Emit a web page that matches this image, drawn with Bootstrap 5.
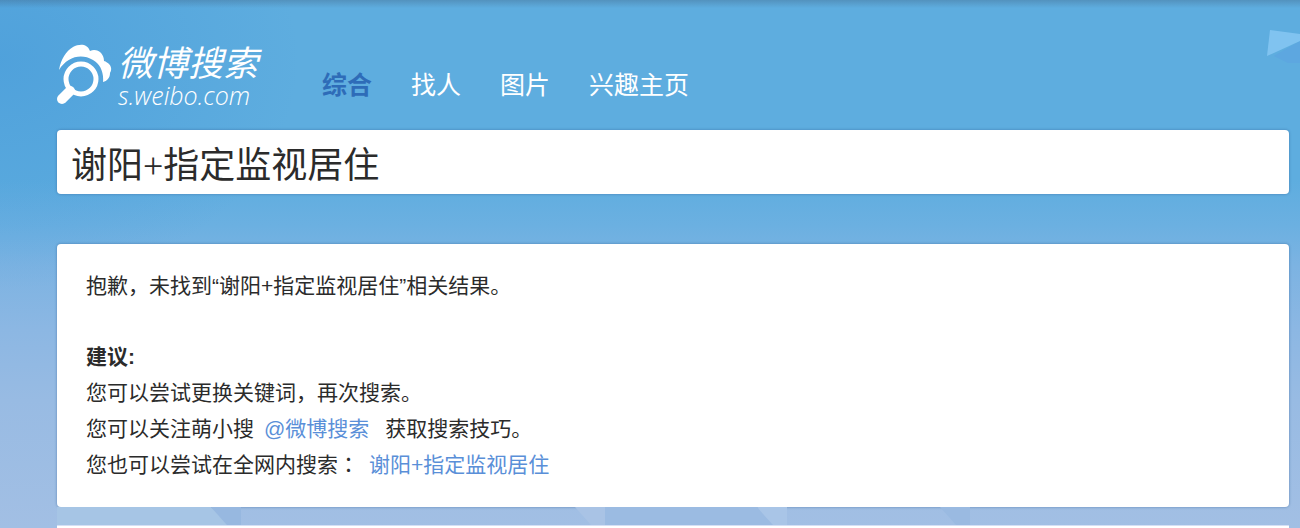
<!DOCTYPE html>
<html lang="zh-CN">
<head>
<meta charset="utf-8">
<meta name="viewport" content="width=device-width, initial-scale=1">
<title>微博搜索</title>
<link href="https://cdn.jsdelivr.net/npm/bootstrap@5.3.0/dist/css/bootstrap.min.css" rel="stylesheet">
<style>
  body {
    font-family: "Liberation Sans", "Noto Sans CJK SC", sans-serif;
    color: #2b2b2b;
    background:
      linear-gradient(rgba(60, 90, 120, .32), rgba(60, 90, 120, 0) 8px) no-repeat,
      radial-gradient(300px 230px at 0 60px, rgba(58, 144, 214, .4), rgba(58, 144, 214, 0)) no-repeat,
      linear-gradient(#5eaddf 0, #5eaddf 180px, #6bb0e1 225px, #7cb3e2 265px, #8cb7e3 330px, #98bbe3 400px, #a2bfe4 528px);
  }
  .page { padding: 0 11px 0 57px; }
  .site-head { height: 130px; padding: 42px 0 0; }
  .logo { color: #fff; gap: 5px; width: 265px; }
  .logo-icon { width: 56px; height: 60px; margin-top: 2px; }
  .logo-words { font-style: italic; padding-top: 2px; }
  .logo-cn { font-size: 35px; line-height: 40px; }
  .logo-en { font-family: "Open Sans", sans-serif; font-weight: 300; font-size: 25px; line-height: 22px; }
  .tabs { gap: 39px; padding-top: 24px; font-size: 25px; line-height: 38px; }
  .tabs .nav-link { padding: 0; color: #fff; }
  .tabs .nav-link.active { color: #2e6cb8; font-weight: 700; }
  .panel { background: #fff; border-radius: 4px; box-shadow: 0 0 2px 1px rgba(50, 95, 150, .3); }
  .query, .query:focus {
    height: 64px; padding: 0 14px; border: 0; border-radius: 4px;
    font-family: "Liberation Serif", "Noto Sans CJK SC", sans-serif;
    font-size: 36px; line-height: 54px; color: #2b2b2b; background: #fff;
  }
  .query:not(:focus) { box-shadow: 0 0 2px 1px rgba(50, 95, 150, .3); }
  .result { margin-top: 50px; padding: 24px 29px; font-size: 21px; line-height: 36px; }
  .result p { margin: 0; }
  .result p.lead-line { margin-bottom: 35px; }
  .result a { color: #5a8fd8; text-decoration: none; margin: 0 10px; }
  .wide-colon { font-family: "Noto Sans CJK TC", sans-serif; line-height: 1; }
  .facets { height: 18px; display: block; width: 100%; }
  .more { border-top: 1px solid #d5dff5; background: #fff; min-height: 3px; }
  .plane { position: absolute; top: 26px; right: 0; width: 36px; height: 40px; }
</style>
</head>
<body>
<svg class="plane" viewBox="0 0 36 40" aria-hidden="true">
  <path d="M10 30 36 15V37H24Z" fill="#5ca5e0" opacity=".8"/>
  <path d="M6 4 36 8V15L3 30Z" fill="#80c3f0"/>
</svg>
<div class="page min-vh-100 d-flex flex-column">
  <header class="site-head d-flex align-items-start">
    <a class="logo d-flex align-items-start text-decoration-none" href="#">
      <svg class="logo-icon" viewBox="0 0 56 60" aria-hidden="true">
        <path d="M2 26C4 15 9 7 16 3 22 0 30-1 33 7 40 4 47 9 47 17 53 19 56 24 53 29 53 34 50 37 46 38 47 28 43 20 36 16 24 9 10 13 2 26Z" fill="#fff"/>
        <circle cx="24" cy="35" r="15" fill="none" stroke="#fff" stroke-width="5"/>
        <path d="M13 47 5 55" stroke="#fff" stroke-width="10" stroke-linecap="round"/>
      </svg>
      <span class="logo-words d-flex flex-column">
        <span class="logo-cn">微博搜索</span>
        <span class="logo-en">s.weibo.com</span>
      </span>
    </a>
    <nav class="nav tabs" aria-label="搜索类型">
      <a class="nav-link active" aria-current="page" href="#">综合</a>
      <a class="nav-link" href="#">找人</a>
      <a class="nav-link" href="#">图片</a>
      <a class="nav-link" href="#">兴趣主页</a>
    </nav>
  </header>
  <form role="search">
    <input class="form-control query" type="text" aria-label="搜索" value="谢阳+指定监视居住">
  </form>
  <main class="result panel">
    <p class="lead-line">抱歉，未找到“谢阳+指定监视居住”相关结果。</p>
    <p class="fw-bold">建议:</p>
    <p>您可以尝试更换关键词，再次搜索。</p>
    <p>您可以关注萌小搜<a href="#">@微博搜索</a> 获取搜索技巧。</p>
    <p>您也可以尝试在全网内搜索<span class="wide-colon" lang="zh-TW">：</span><a href="#">谢阳+指定监视居住</a></p>
  </main>
  <svg class="facets" viewBox="0 0 1232 18" preserveAspectRatio="none" aria-hidden="true">
    <path d="M0 0H154L170 18H0Z" fill="#a6c5e5"/>
    <path d="M154 0H184V18H170Z" fill="#97b8e0"/>
    <path d="M518 0H548V18H534Z" fill="#a9c3e5"/>
    <path d="M548 0H700L716 18H548Z" fill="#9bbbe2"/>
    <path d="M700 0H730V18H716Z" fill="#a9c5e7"/>
    <path d="M883 0H913V18H899Z" fill="#9abae1"/>
  </svg>
  <section class="more flex-grow-1"></section>
</div>
<script src="https://cdn.jsdelivr.net/npm/bootstrap@5.3.0/dist/js/bootstrap.bundle.min.js"></script>
</body>
</html>
